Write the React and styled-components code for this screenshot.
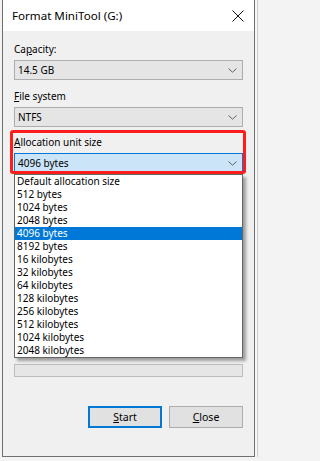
import React from "react";
import styled, { createGlobalStyle } from "styled-components";

const GlobalStyle = createGlobalStyle`
  html, body { margin: 0; padding: 0; background: #f3f3f3; }
  body { font-family: "Noto Sans", "Liberation Sans", sans-serif; color: #000; }
  * { box-sizing: border-box; }
`;

const Window = styled.div`
  margin-left: 2px;
  width: 253px;
  height: 457px;
  border: 1px solid #6f6f6f;
  border-top: none;
  background: #f0f0f0;
  display: flex;
  flex-direction: column;
  box-shadow: 2px 0 0 #f7f7f7, 3px 0 0 #cdcdcd;
`;

const TitleBar = styled.div`
  height: 31px;
  background: #fff;
  display: flex;
  align-items: center;
  justify-content: space-between;
  padding: 0 9px 0 9px;
  flex-shrink: 0;
`;

const Title = styled.span`
  font-size: 11.6px;
  line-height: 16px;
`;

const CloseX = styled.svg`
  width: 12px;
  height: 12px;
  margin-right: 1px;
`;

const Body = styled.div`
  display: flex;
  flex-direction: column;
  padding: 0 11px;
`;

const Label = styled.div`
  font-size: 10px;
  line-height: 13px;
  margin-top: ${(p) => p.$mt}px;
`;

const Key = styled.span`
  text-decoration: underline;
  text-underline-offset: 1px;
`;

const Select = styled.div`
  margin-top: 4px;
  height: 20px;
  border: 1px solid ${(p) => (p.$active ? "#0078d7" : "#adadad")};
  background: ${(p) => (p.$active ? "#cce4f7" : "#e5e5e5")};
  display: flex;
  align-items: center;
  justify-content: space-between;
  padding: 0 5px 0 3px;
  font-size: 10px;
`;

const Chevron = styled.svg`
  width: 9px;
  height: 5px;
`;

const Group = styled.div`
  position: relative;
  display: flex;
  flex-direction: column;
  margin-top: 9px;
`;

const Highlight = styled.div`
  position: absolute;
  top: -6px;
  left: -4px;
  width: 236px;
  height: 44px;
  border: 3px solid #ff1c1c;
  border-radius: 3px;
  z-index: 3;
  pointer-events: none;
`;

const DropList = styled.ul`
  position: absolute;
  top: 38px;
  left: 0;
  width: 229px;
  margin: 0;
  padding: 0;
  list-style: none;
  background: #fff;
  border: 1px solid #646464;
  box-shadow: 3px 3px 3px rgba(0, 0, 0, 0.35);
  z-index: 2;
`;

const Item = styled.li`
  height: 13px;
  line-height: 13px;
  font-size: 10px;
  padding-left: 2px;
  white-space: nowrap;
  background: ${(p) => (p.$selected ? "#0078d7" : "transparent")};
  color: ${(p) => (p.$selected ? "#fff" : "#000")};
`;

const Progress = styled.div`
  margin-top: 191px;
  height: 13px;
  border: 1px solid #bcbcbc;
  background: #e6e6e6;
`;

const Buttons = styled.div`
  margin-top: 29px;
  display: flex;
  justify-content: flex-end;
  gap: 7px;
`;

const Button = styled.div`
  width: 74px;
  height: 22px;
  background: #e1e1e1;
  border: ${(p) => (p.$default ? "2px solid #0078d7" : "1px solid #adadad")};
  display: flex;
  align-items: center;
  justify-content: center;
  font-size: 10.5px;
`;

const sizes = [
  "Default allocation size",
  "512 bytes",
  "1024 bytes",
  "2048 bytes",
  "4096 bytes",
  "8192 bytes",
  "16 kilobytes",
  "32 kilobytes",
  "64 kilobytes",
  "128 kilobytes",
  "256 kilobytes",
  "512 kilobytes",
  "1024 kilobytes",
  "2048 kilobytes",
];

const Down = () => (
  <Chevron viewBox="0 0 9 5">
    <path d="M0.5 0.5 L4.5 4.2 L8.5 0.5" fill="none" stroke="#5f5f5f" strokeWidth="1" />
  </Chevron>
);

export default function App() {
  return (
    <>
      <GlobalStyle />
      <Window>
        <TitleBar>
          <Title>Format MiniTool (G:)</Title>
          <CloseX viewBox="0 0 12 12">
            <path d="M0.5 0.5 L11.5 11.5 M11.5 0.5 L0.5 11.5" stroke="#111" strokeWidth="1" />
          </CloseX>
        </TitleBar>
        <Body>
          <Label $mt={12}>
            Ca<Key>p</Key>acity:
          </Label>
          <Select>
            <span>14.5 GB</span>
            <Down />
          </Select>
          <Label $mt={10}>
            <Key>F</Key>ile system
          </Label>
          <Select>
            <span>NTFS</span>
            <Down />
          </Select>
          <Group>
            <Label $mt={0}>
              <Key>A</Key>llocation unit size
            </Label>
            <Select $active>
              <span>4096 bytes</span>
              <Down />
            </Select>
            <Highlight />
            <DropList>
              {sizes.map((s) => (
                <Item key={s} $selected={s === "4096 bytes"}>
                  {s}
                </Item>
              ))}
            </DropList>
          </Group>
          <Progress />
          <Buttons>
            <Button $default>
              <span>
                <Key>S</Key>tart
              </span>
            </Button>
            <Button>
              <span>
                <Key>C</Key>lose
              </span>
            </Button>
          </Buttons>
        </Body>
      </Window>
    </>
  );
}
